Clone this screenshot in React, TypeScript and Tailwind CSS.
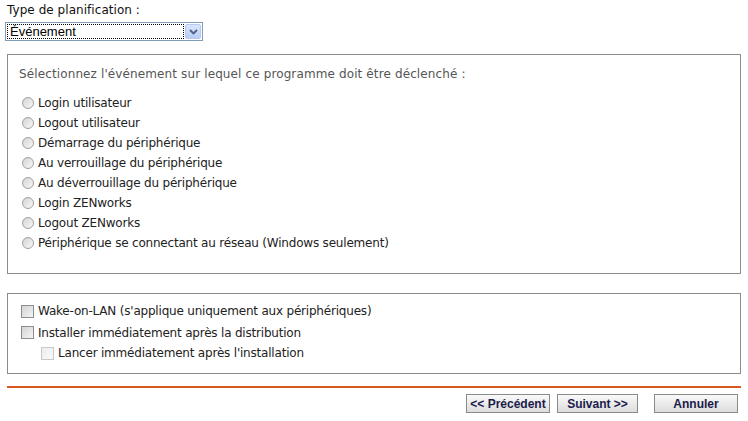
import React from "react";

const font = { fontFamily: '"DejaVu Sans", Verdana, sans-serif', letterSpacing: "0.05px" };
const opt = { letterSpacing: "-0.2px" };

function Radio() {
  return (
    <span className="inline-block w-[12px] h-[12px] rounded-full border border-[#a0a0a0] bg-gradient-to-br from-[#d4d4d4] to-[#f8f8f8] shrink-0" />
  );
}

function Check({ disabled }: { disabled?: boolean }) {
  return (
    <span
      className={
        "inline-block w-[13px] h-[13px] border shrink-0 " +
        (disabled
          ? "border-[#c9c9c9] bg-gradient-to-br from-[#ececec] to-[#fafafa]"
          : "border-[#8e8e8e] bg-gradient-to-br from-[#d4d4d4] to-[#f4f4f4]")
      }
    />
  );
}

const radios = [
  "Login utilisateur",
  "Logout utilisateur",
  "Démarrage du périphérique",
  "Au verrouillage du périphérique",
  "Au déverrouillage du périphérique",
  "Login ZENworks",
  "Logout ZENworks",
  "Périphérique se connectant au réseau (Windows seulement)",
];

function Btn({ children, w, cls = "" }: { children: React.ReactNode; w: string; cls?: string }) {
  return (
    <div
      className={
        "h-[19px] border border-[#8a8a8a] bg-gradient-to-b from-[#fafafa] to-[#dcdcdc] flex items-center justify-center text-[12px] font-bold text-[#1b1b4a] " +
        w +
        " " +
        cls
      }
      style={{ fontFamily: '"Liberation Sans", Arial, sans-serif', letterSpacing: "0px" }}
    >
      {children}
    </div>
  );
}

export default function App() {
  return (
    <div className="w-[748px] h-[421px] bg-white px-[7px] pt-[2px] text-[#222]" style={font}>
      <div className="text-[12px] leading-[16px] text-[#111]">Type de planification :</div>
      <div className="ml-[-2px] mt-[4px] w-[198px] h-[19px] border border-[#7f9db9] flex items-center bg-white p-[1px]">
        <div
          className="flex-1 h-full border border-dotted border-black flex items-center pl-[2px] text-[13px] text-black"
          style={{ fontFamily: '"Liberation Sans", Arial, sans-serif', letterSpacing: "0px" }}
        >
          Événement
        </div>
        <div className="w-[16px] h-full ml-[1px] rounded-[2px] border border-[#b5c8ef] bg-gradient-to-b from-[#dbe6fd] to-[#b7cdf6] flex items-center justify-center">
          <svg width="9" height="6" viewBox="0 0 9 6">
            <path d="M1 1 L4.5 4.5 L8 1" fill="none" stroke="#4d6185" strokeWidth="1.8" />
          </svg>
        </div>
      </div>

      <div className="mt-[13px] h-[220px] border border-[#8c8c8c] pl-[11px] pt-[11px]">
        <div className="text-[12px] leading-[16px] text-[#555]" style={{ letterSpacing: "0.12px" }}>
          Sélectionnez l'événement sur lequel ce programme doit être déclenché :
        </div>
        <div className="mt-[11px] flex flex-col">
          {radios.map((r) => (
            <div key={r} className="h-[20px] flex items-center gap-[4px] pl-[3px] text-[12px] text-[#222]">
              <Radio />
              <span style={opt}>{r}</span>
            </div>
          ))}
        </div>
      </div>

      <div className="mt-[19px] h-[81px] border border-[#8c8c8c] pl-[13px] pt-[7px] text-[12px] text-[#222]">
        <div className="h-[20px] flex items-center gap-[4px]">
          <Check />
          <span style={opt}>Wake-on-LAN (s'applique uniquement aux périphériques)</span>
        </div>
        <div className="h-[21px] mt-[1px] flex items-center gap-[4px]">
          <Check />
          <span style={opt}>Installer immédiatement après la distribution</span>
        </div>
        <div className="h-[20px] flex items-center gap-[4px] pl-[20px]">
          <Check disabled />
          <span style={opt}>Lancer immédiatement après l'installation</span>
        </div>
      </div>

      <div className="mt-[12px] h-[2px] bg-[#d6581f]" />

      <div className="mt-[6px] flex justify-end pr-[3px]">
        <Btn w="w-[84px]">&lt;&lt; Précédent</Btn>
        <Btn w="w-[81px]" cls="ml-[7px]">Suivant &gt;&gt;</Btn>
        <Btn w="w-[84px]" cls="ml-[16px]">Annuler</Btn>
      </div>
    </div>
  );
}
